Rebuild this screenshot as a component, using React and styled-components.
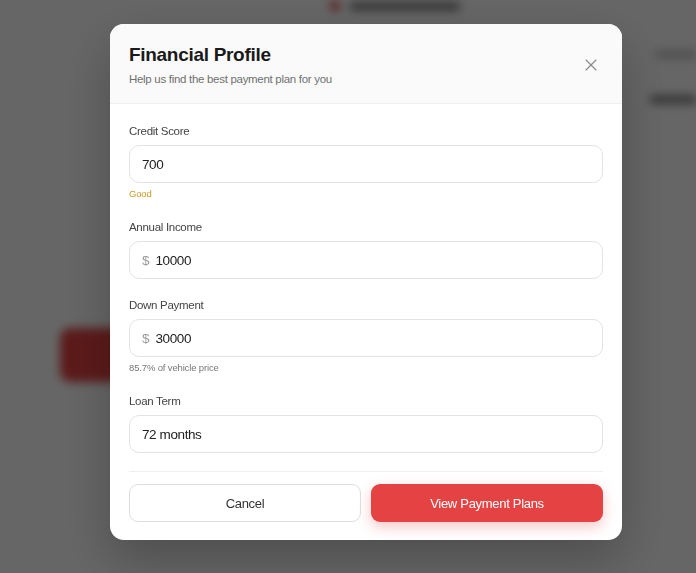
import styled, { createGlobalStyle } from "styled-components";
import { X } from "lucide-react";

const GlobalStyle = createGlobalStyle`
  html, body {
    margin: 0;
    padding: 0;
    background: #fff;
    font-family: "Liberation Sans", Arial, sans-serif;
  }
  * { box-sizing: border-box; }
`;

const fields = [
  { label: "Credit Score", value: "700", hint: "Good", tone: "good" },
  { label: "Annual Income", value: "10000", prefix: "$" },
  { label: "Down Payment", value: "30000", prefix: "$", hint: "85.7% of vehicle price" },
  { label: "Loan Term", value: "72 months" },
];

const App = () => {
  return (
    <>
      <GlobalStyle />
      <Page>
        <TopStrip>
          <Dot />
          <GhostText width={110} />
        </TopStrip>
        <PageBody>
          <Side>
            <RedGhost />
          </Side>
          <RightCol>
            <GhostText width={45} light />
            <GhostText width={50} />
          </RightCol>
        </PageBody>
      </Page>

      <Overlay>
        <Modal>
          <Header>
            <div>
              <Title>Financial Profile</Title>
              <Subtitle>Help us find the best payment plan for you</Subtitle>
            </div>
            <CloseButton aria-label="Close">
              <X size={20} strokeWidth={1.4} />
            </CloseButton>
          </Header>

          <Body>
            {fields.map((f) => (
              <Field key={f.label}>
                <Label>{f.label}</Label>
                <InputBox>
                  {f.prefix && <Prefix>{f.prefix}</Prefix>}
                  <Value>{f.value}</Value>
                </InputBox>
                {f.hint && <Hint tone={f.tone}>{f.hint}</Hint>}
              </Field>
            ))}

            <Footer>
              <CancelButton>Cancel</CancelButton>
              <PrimaryButton>View Payment Plans</PrimaryButton>
            </Footer>
          </Body>
        </Modal>
      </Overlay>
    </>
  );
};
export default App;

const Page = styled.div`
  width: 696px;
  height: 573px;
  overflow: hidden;
  filter: blur(5px);
  background: #fff;
`;
const TopStrip = styled.div`
  display: flex;
  align-items: center;
  gap: 10px;
  height: 12px;
  margin-left: 330px;
`;
const Dot = styled.span`
  width: 10px;
  height: 10px;
  border-radius: 50%;
  background: #e54343;
`;
const GhostText = styled.span`
  display: block;
  width: ${(p) => p.width}px;
  height: 9px;
  border-radius: 3px;
  background: ${(p) => (p.light ? "#c8c8c8" : "#888")};
`;
const PageBody = styled.div`
  display: flex;
  justify-content: space-between;
`;
const Side = styled.div`
  padding: 316px 0 0 60px;
`;
const RedGhost = styled.div`
  width: 110px;
  height: 54px;
  border-radius: 10px;
  background: #e54343;
`;
const RightCol = styled.div`
  display: flex;
  flex-direction: column;
  align-items: flex-end;
  gap: 36px;
  padding: 38px 0 0;
  margin-right: -4px;
`;

const Overlay = styled.div`
  position: fixed;
  inset: 0;
  background: rgba(0, 0, 0, 0.6);
  display: flex;
  align-items: flex-start;
  justify-content: flex-start;
  padding: 24px 0 0 110px;
`;
const Modal = styled.div`
  width: 512px;
  background: #fff;
  border-radius: 14px;
  overflow: hidden;
  box-shadow: 0 20px 50px rgba(0, 0, 0, 0.25);
`;
const Header = styled.div`
  display: flex;
  align-items: center;
  justify-content: space-between;
  background: #fafafa;
  border-bottom: 1px solid #f0f0f0;
  padding: 19px 19px 17px 19px;
  height: 80px;
`;
const Title = styled.h2`
  margin: 0;
  font-size: 19px;
  line-height: 24px;
  font-weight: 700;
  letter-spacing: -0.3px;
  color: #1a1a1a;
`;
const Subtitle = styled.p`
  margin: 4px 0 0;
  font-size: 11.5px;
  line-height: 16px;
  letter-spacing: -0.3px;
  color: #707070;
`;
const CloseButton = styled.button`
  display: flex;
  align-items: center;
  justify-content: center;
  border: 0;
  background: transparent;
  padding: 0;
  width: 24px;
  height: 24px;
  color: #8a8a8a;
  cursor: pointer;
`;
const Body = styled.div`
  padding: 19px 19px 18px;
`;
const Field = styled.div`
  margin-bottom: 18px;
`;
const Label = styled.div`
  font-size: 11.5px;
  line-height: 16px;
  letter-spacing: -0.3px;
  color: #444;
  margin-bottom: 6px;
`;
const InputBox = styled.div`
  display: flex;
  align-items: center;
  gap: 6px;
  height: 38px;
  padding: 0 12px;
  border: 1px solid #e3e3e3;
  border-radius: 10px;
  background: #fff;
`;
const Prefix = styled.span`
  font-size: 13.5px;
  color: #9a9a9a;
`;
const Value = styled.span`
  font-size: 13.5px;
  letter-spacing: -0.4px;
  color: #222;
`;
const Hint = styled.div`
  margin-top: 4px;
  font-size: 9.5px;
  line-height: 14px;
  letter-spacing: -0.15px;
  color: ${(p) => (p.tone === "good" ? "#c79a1e" : "#777")};
`;
const Footer = styled.div`
  display: grid;
  grid-template-columns: 1fr 1fr;
  gap: 10px;
  border-top: 1px solid #efefef;
  padding-top: 12px;
`;
const ButtonBase = styled.button`
  height: 38px;
  border-radius: 9px;
  font-family: inherit;
  font-size: 13px;
  letter-spacing: -0.3px;
  cursor: pointer;
`;
const CancelButton = styled(ButtonBase)`
  background: #fff;
  border: 1px solid #dedede;
  color: #333;
`;
const PrimaryButton = styled(ButtonBase)`
  background: #e54343;
  border: 0;
  color: #fff;
  box-shadow: 0 5px 14px rgba(229, 67, 67, 0.3);
`;
